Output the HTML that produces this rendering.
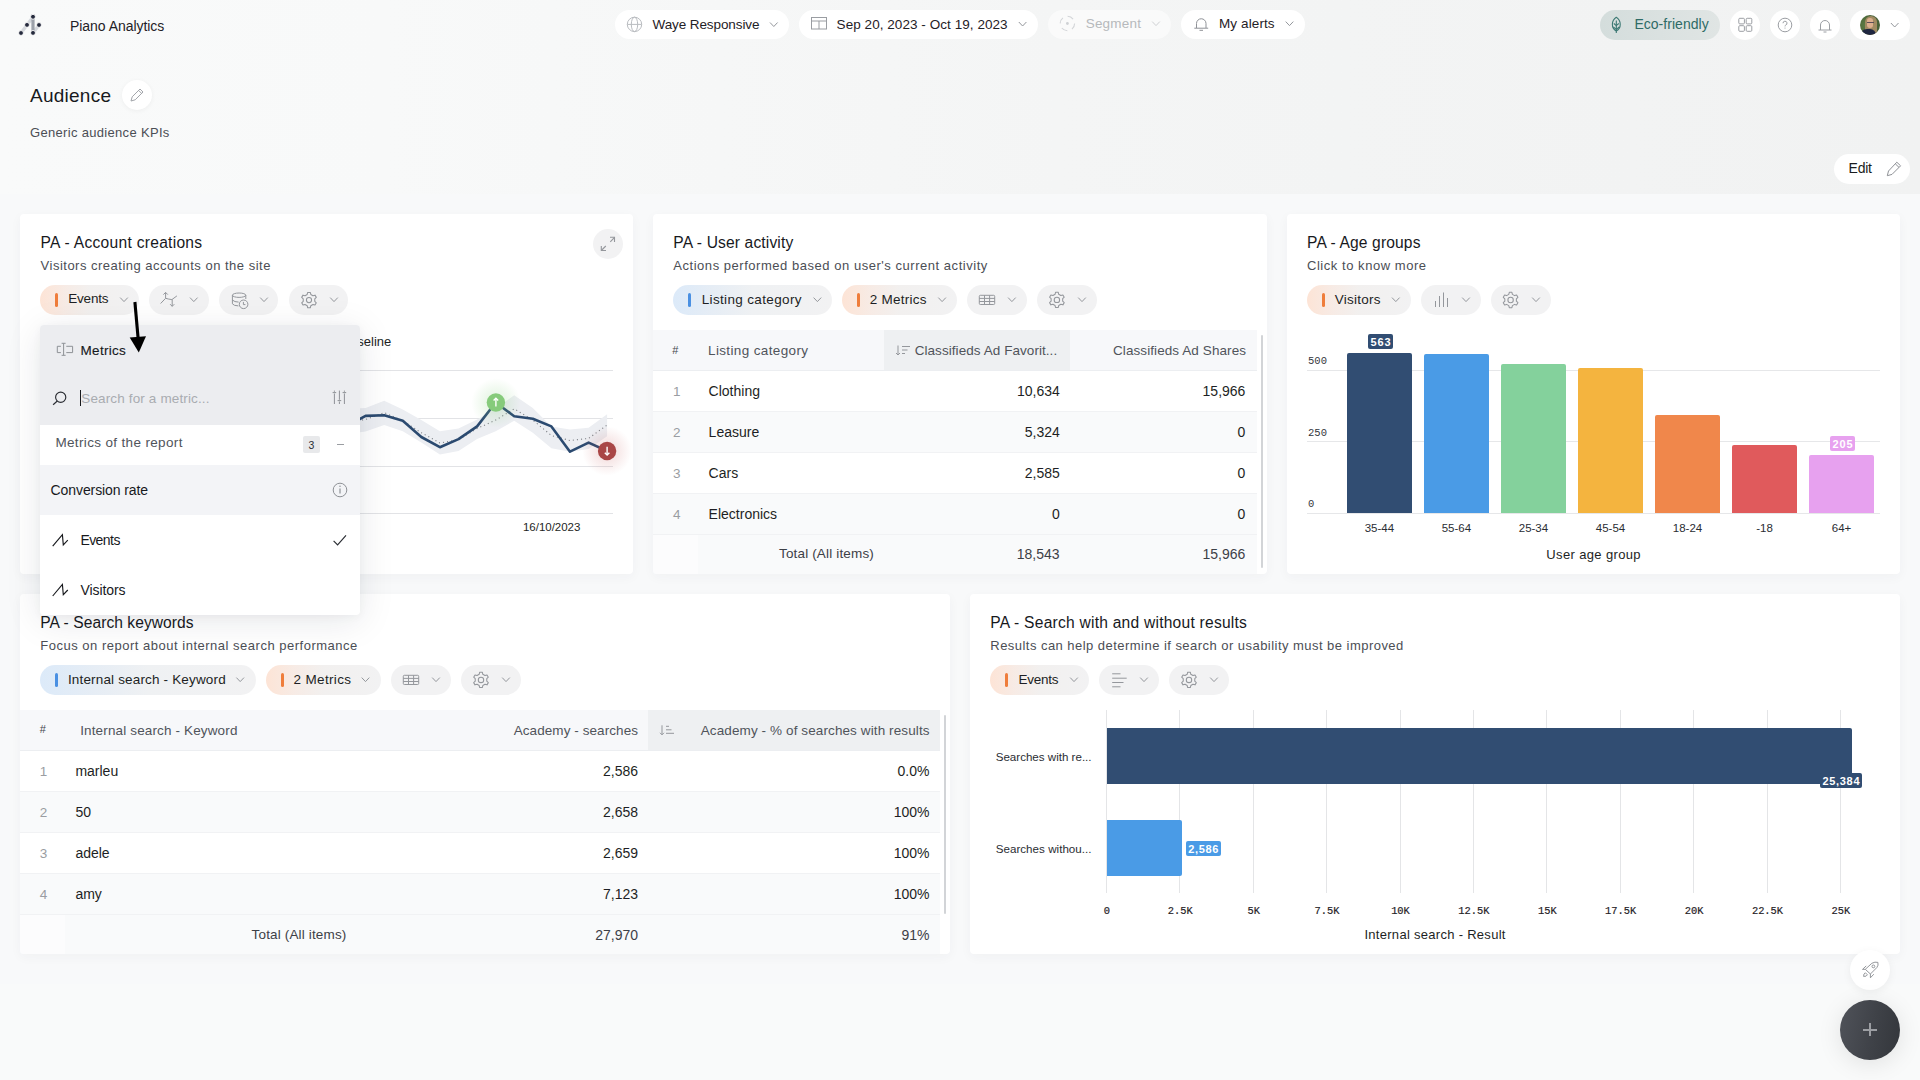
<!DOCTYPE html>
<html><head><meta charset="utf-8"><style>*{box-sizing:border-box;margin:0;padding:0}
html,body{width:1920px;height:1080px;overflow:hidden}
body{font-family:"Liberation Sans",sans-serif;color:#1d1f24;background:#f9fafa;position:relative}
.a{position:absolute}
.pill{position:absolute;height:30px;border-radius:15px;background:#fff}
.gp{position:absolute;height:30px;border-radius:15px;background:#f2f2f3}
.t{position:absolute;white-space:nowrap;line-height:1}
.card{position:absolute;background:#fff;border-radius:4px}
svg{position:absolute;overflow:visible}
</style></head><body>
<div class="a" style="left:0;top:0;width:1920px;height:194px;background:linear-gradient(90deg,#f9fafa 0%,#f8f9f9 20%,#f4f5f5 55%,#f1f2f2 100%)"></div>
<div class="a" style="left:0;top:194px;width:1920px;height:790px;background:#f8f9fa"></div>
<svg style="left:0;top:0" width="1" height="1"><line x1="21" y1="33" x2="33" y2="17" stroke="#d5d8dd" stroke-width="3.2" stroke-linecap="round"/>
 <line x1="33" y1="33" x2="39" y2="25" stroke="#d5d8dd" stroke-width="3.2"/>
 <line x1="33" y1="17" x2="33" y2="33" stroke="#9ca1aa" stroke-width="3.2"/>
 <circle cx="21" cy="33" r="2.45" fill="#252a3d" stroke="#fbfbfb" stroke-width="0.9"/><circle cx="27" cy="24.9" r="2.45" fill="#252a3d" stroke="#fbfbfb" stroke-width="0.9"/>
 <circle cx="33" cy="16.8" r="2.45" fill="#252a3d" stroke="#fbfbfb" stroke-width="0.9"/><circle cx="39" cy="25" r="2.45" fill="#252a3d" stroke="#fbfbfb" stroke-width="0.9"/>
 <circle cx="33" cy="32.9" r="2.45" fill="#252a3d" stroke="#fbfbfb" stroke-width="0.9"/></svg>
<div class="t" style="left:70.00px;top:18.65px;font-size:14px;color:#1f2126;letter-spacing:-0.046px;font-family:'Liberation Sans',sans-serif;">Piano Analytics</div>
<div class="pill" style="left:615px;top:10px;width:174px;height:29px"></div>
<svg style="left:0;top:0" width="1" height="1"><g fill="none" stroke="#b9bcc0" stroke-width="1"><circle cx="634.5" cy="24.4" r="7.2"/><ellipse cx="634.5" cy="24.4" rx="3.2" ry="7.2"/><line x1="627.3" y1="24.4" x2="641.7" y2="24.4"/></g></svg>
<div class="t" style="left:652.50px;top:17.87px;font-size:13.5px;color:#1f2126;letter-spacing:-0.093px;font-family:'Liberation Sans',sans-serif;">Waye Responsive</div>
<svg style="left:0;top:0" width="1" height="1"><polyline points="770.00,22.50 773.80,26.50 777.60,22.50" fill="none" stroke="#94979c" stroke-width="1.0"/></svg>
<div class="pill" style="left:799px;top:10px;width:239px;height:29px"></div>
<svg style="left:0;top:0" width="1" height="1"><g fill="none" stroke="#9a9da2" stroke-width="1"><rect x="811.5" y="17.5" width="15" height="11.5"/><line x1="811.5" y1="21" x2="826.5" y2="21"/><line x1="819" y1="21" x2="819" y2="29"/></g></svg>
<div class="t" style="left:836.60px;top:17.57px;font-size:13.5px;color:#1f2126;letter-spacing:0.053px;font-family:'Liberation Sans',sans-serif;">Sep 20, 2023 - Oct 19, 2023</div>
<svg style="left:0;top:0" width="1" height="1"><polyline points="1018.80,22.00 1022.60,26.00 1026.40,22.00" fill="none" stroke="#94979c" stroke-width="1.0"/></svg>
<div class="pill" style="left:1048px;top:10px;width:123px;height:29px;background:rgba(255,255,255,0.5)"></div>
<svg style="left:0;top:0" width="1" height="1"><circle cx="1067.4" cy="23.5" r="7.2" fill="none" stroke="#d3d5d8" stroke-width="1.1" stroke-dasharray="6.3 5"/><circle cx="1067.4" cy="23.5" r="1.4" fill="#cfd1d4"/></svg>
<div class="t" style="left:1085.70px;top:16.97px;font-size:13.5px;color:#b6b9bc;letter-spacing:0.211px;font-family:'Liberation Sans',sans-serif;">Segment</div>
<svg style="left:0;top:0" width="1" height="1"><polyline points="1152.20,21.60 1156.00,25.60 1159.80,21.60" fill="none" stroke="#cfd1d4" stroke-width="1.0"/></svg>
<div class="pill" style="left:1181px;top:10px;width:124px;height:29px"></div>
<svg style="left:0;top:0" width="1" height="1"><g fill="none" stroke="#8f9297" stroke-width="1"><path d="M1196.5 28 V23.5 a4.75 4.75 0 0 1 9.5 0 V28"/><line x1="1194.3" y1="28.2" x2="1208.2" y2="28.2"/><line x1="1199.5" y1="30.3" x2="1203" y2="30.3"/></g></svg>
<div class="t" style="left:1219.00px;top:16.97px;font-size:13.5px;color:#1f2126;letter-spacing:0.105px;font-family:'Liberation Sans',sans-serif;">My alerts</div>
<svg style="left:0;top:0" width="1" height="1"><polyline points="1285.70,21.60 1289.50,25.60 1293.30,21.60" fill="none" stroke="#94979c" stroke-width="1.0"/></svg>
<div class="pill" style="left:1600px;top:10px;width:120px;height:30px;background:linear-gradient(90deg,#d4dddc,#e0e5e4)"></div>
<svg style="left:0;top:0" width="1" height="1"><g fill="none" stroke="#3b7873" stroke-width="1.1"><path d="M1616.3 17.3 C1611.3 20.5 1610.8 28.3 1616.3 31 C1621.8 28.3 1621.3 20.5 1616.3 17.3 Z"/><line x1="1616.3" y1="20.5" x2="1616.3" y2="33"/>
 <polyline points="1613.8,23.5 1616.3,25.6 1618.8,23.5"/><polyline points="1613.3,27 1616.3,29.4 1619.3,27"/></g></svg>
<div class="t" style="left:1634.40px;top:16.85px;font-size:14px;color:#2e6b66;letter-spacing:0.035px;font-family:'Liberation Sans',sans-serif;">Eco-friendly</div>
<div class="pill" style="left:1730px;top:10px;width:30px;height:30px"></div>
<div class="pill" style="left:1770px;top:10px;width:30px;height:30px"></div>
<div class="pill" style="left:1810px;top:10px;width:30px;height:30px"></div>
<svg style="left:0;top:0" width="1" height="1"><g fill="none" stroke="#9b9ea3" stroke-width="1"><rect x="1738.8" y="18.3" width="5.6" height="5.6" rx="1"/><rect x="1746.2" y="18.3" width="5.6" height="5.6" rx="1"/><rect x="1738.8" y="25.7" width="5.6" height="5.6" rx="1"/><rect x="1746.2" y="25.7" width="5.6" height="5.6" rx="1"/></g></svg>
<svg style="left:0;top:0" width="1" height="1"><circle cx="1785" cy="25" r="6.8" fill="none" stroke="#9b9ea3" stroke-width="1"/><path d="M1783 23.2 a2 2 0 1 1 2.7 1.9 q-0.7 0.3 -0.7 1.3" fill="none" stroke="#9b9ea3" stroke-width="1"/><circle cx="1785" cy="28" r="0.6" fill="#9b9ea3"/></svg>
<svg style="left:0;top:0" width="1" height="1"><g fill="none" stroke="#9b9ea3" stroke-width="1"><path d="M1820.5 30 V25 a4.5 4.5 0 0 1 9 0 V30"/><line x1="1818.5" y1="30" x2="1831.5" y2="30"/><line x1="1823.5" y1="32" x2="1826.5" y2="32"/></g></svg>
<div class="pill" style="left:1850px;top:10px;width:60px;height:30px"></div>
<div class="a" style="left:1860px;top:15px;width:20px;height:20px;border-radius:10px;overflow:hidden;background:radial-gradient(circle at 30% 50%,#5d7d45,#3f5532)"><div class="a" style="left:4.5px;top:0.5px;width:12.5px;height:19px;border-radius:6px 6px 4px 4px;background:#a08a62"></div><div class="a" style="left:6.8px;top:2.5px;width:6.6px;height:10px;border-radius:3.3px 3.3px 3.5px 3.5px;background:#dcae8e"></div><div class="a" style="left:6.5px;top:6.5px;width:7px;height:1.4px;background:#5b4d57"></div><div class="a" style="left:0px;top:13.5px;width:16px;height:9px;border-radius:7px 6px 0 0;background:#1f2640"></div></div>
<svg style="left:0;top:0" width="1" height="1"><polyline points="1890.90,23.00 1894.70,27.00 1898.50,23.00" fill="none" stroke="#94979c" stroke-width="1.0"/></svg>
<div class="t" style="left:30.00px;top:85.92px;font-size:19px;color:#17191d;letter-spacing:0.253px;font-family:'Liberation Sans',sans-serif;">Audience</div>
<div class="pill" style="left:122px;top:80px;width:30px;height:30px;box-shadow:0 1px 5px rgba(0,0,0,0.05)"></div>
<svg style="left:0;top:0" width="1" height="1"><g fill="none" stroke="#a2a5aa" stroke-width="1" stroke-linejoin="round"><path d="M131 101 L132.2 96.8 L140 89 L143 92 L135.2 99.8 Z"/><line x1="138.6" y1="90.4" x2="141.6" y2="93.4"/></g></svg>
<div class="t" style="left:30.00px;top:126.00px;font-size:13px;color:#4b4e55;letter-spacing:0.317px;font-family:'Liberation Sans',sans-serif;">Generic audience KPIs</div>
<div class="pill" style="left:1834px;top:154px;width:76px;height:30px"></div>
<div class="t" style="left:1848.60px;top:161.35px;font-size:14px;color:#1a1c20;letter-spacing:-0.275px;font-family:'Liberation Sans',sans-serif;">Edit</div>
<svg style="left:0;top:0" width="1" height="1"><g fill="none" stroke="#8e9196" stroke-width="1" stroke-linejoin="round"><path d="M1887.3 175.7 L1888.5 171 L1896.8 162.2 L1900.6 165.8 L1892 174.4 Z"/><line x1="1895.3" y1="163.8" x2="1899" y2="167.4"/></g></svg>
<div class="card" style="left:20px;top:214px;width:613px;height:360px;box-shadow:0 3px 12px rgba(40,50,70,0.04)"></div>
<div class="card" style="left:653px;top:214px;width:614px;height:360px;box-shadow:0 3px 12px rgba(40,50,70,0.04)"></div>
<div class="card" style="left:1287px;top:214px;width:613px;height:360px;box-shadow:0 3px 12px rgba(40,50,70,0.04)"></div>
<div class="card" style="left:20px;top:594px;width:930px;height:360px;box-shadow:0 3px 12px rgba(40,50,70,0.04)"></div>
<div class="card" style="left:970px;top:594px;width:930px;height:360px;box-shadow:0 3px 12px rgba(40,50,70,0.04)"></div>
<div class="t" style="left:40.60px;top:234.79px;font-size:15.6px;color:#17191d;letter-spacing:0.276px;font-family:'Liberation Sans',sans-serif;">PA - Account creations</div>
<div class="t" style="left:40.60px;top:258.70px;font-size:13px;color:#4b4e55;letter-spacing:0.495px;font-family:'Liberation Sans',sans-serif;">Visitors creating accounts on the site</div>
<div class="a" style="left:593px;top:229px;width:30px;height:30px;border-radius:15px;background:#f2f2f3"></div>
<svg style="left:0;top:0" width="1" height="1"><g fill="none" stroke="#94979c" stroke-width="1.1"><polyline points="610,237.3 614.5,237.3 614.5,242"/><line x1="610.3" y1="241.8" x2="614.5" y2="237.3"/><polyline points="601.3,246 601.3,250.5 606,250.5"/><line x1="601.3" y1="250.5" x2="605.8" y2="246"/></g></svg>
<div class="a" style="left:40.0px;top:285.0px;width:98.6px;height:30.0px;border-radius:15px;background:linear-gradient(90deg,#fde4d6 0%,#f7ebe5 25%,#f2f0ef 50%,#f2f2f3 100%)"></div>
<div class="a" style="left:55.0px;top:293.0px;width:3px;height:14px;border-radius:1.5px;background:#ef7d3b"></div>
<div class="t" style="left:68.30px;top:292.47px;font-size:13.5px;color:#1d1f24;letter-spacing:-0.214px;font-family:'Liberation Sans',sans-serif;">Events</div>
<svg style="left:0;top:0" width="1" height="1"><polyline points="120.20,297.60 124.00,301.60 127.80,297.60" fill="none" stroke="#94979c" stroke-width="1.0"/></svg>
<div class="a" style="left:149.3px;top:285.0px;width:59.3px;height:30.0px;border-radius:15px;background:#f2f2f3"></div>
<svg style="left:0;top:0" width="1" height="1"><g fill="none" stroke="#94979c" stroke-width="1"><polyline points="160.6,303.5 165.6,298.3 168.8,299.1 171.9,299.6 176.9,295.9"/><line x1="165.6" y1="298.3" x2="165.6" y2="292.5"/><polyline points="163.4,294.6 165.6,292.4 167.8,294.6"/><line x1="172.2" y1="299.6" x2="172.2" y2="306.3"/><polyline points="170.1,304.2 172.2,306.3 174.3,304.2"/></g></svg>
<svg style="left:0;top:0" width="1" height="1"><polyline points="190.00,297.60 193.80,301.60 197.60,297.60" fill="none" stroke="#94979c" stroke-width="1.0"/></svg>
<div class="a" style="left:219.2px;top:285.0px;width:59.3px;height:30.0px;border-radius:15px;background:#f2f2f3"></div>
<svg style="left:0;top:0" width="1" height="1"><g fill="none" stroke="#94979c" stroke-width="1"><ellipse cx="239.1" cy="295.2" rx="6.7" ry="2.2"/><path d="M232.4 295.2 V303.8 q1.2 2 6 2.1"/><path d="M232.4 300 q2 2.1 6.2 2.1"/><path d="M245.8 295.2 V299"/></g><circle cx="243.6" cy="304.3" r="4.3" fill="#f2f2f3" stroke="#94979c" stroke-width="1"/><polyline points="243.4,301.9 243.4,304.6 245.4,304.6" fill="none" stroke="#94979c" stroke-width="1"/></svg>
<svg style="left:0;top:0" width="1" height="1"><polyline points="260.20,297.60 264.00,301.60 267.80,297.60" fill="none" stroke="#94979c" stroke-width="1.0"/></svg>
<div class="a" style="left:289.2px;top:285.0px;width:59.3px;height:30.0px;border-radius:15px;background:#f2f2f3"></div>
<svg style="left:0;top:0" width="1" height="1"><path d="M307.18 294.49 L307.70 292.41 L310.30 292.41 L310.82 294.49 L312.95 295.72 L315.01 295.13 L316.31 297.38 L314.77 298.87 L314.77 301.33 L316.31 302.82 L315.01 305.07 L312.95 304.48 L310.82 305.71 L310.30 307.79 L307.70 307.79 L307.18 305.71 L305.05 304.48 L302.99 305.07 L301.69 302.82 L303.23 301.33 L303.23 298.87 L301.69 297.38 L302.99 295.13 L305.05 295.72 Z" fill="none" stroke="#94979c" stroke-width="1.05" stroke-linejoin="round"/><circle cx="309" cy="300.1" r="2.6" fill="none" stroke="#94979c" stroke-width="1.05"/></svg>
<svg style="left:0;top:0" width="1" height="1"><polyline points="330.20,297.60 334.00,301.60 337.80,297.60" fill="none" stroke="#94979c" stroke-width="1.0"/></svg>
<div class="a" style="left:60px;top:369.8px;width:553px;height:1px;background:#e2e3e6"></div>
<div class="a" style="left:60px;top:417.7px;width:553px;height:1px;background:#e2e3e6"></div>
<div class="a" style="left:60px;top:465.7px;width:553px;height:1px;background:#e2e3e6"></div>
<div class="a" style="left:60px;top:512.6px;width:553px;height:1px;background:#e2e3e6"></div>
<div class="t" style="left:341.43px;top:335.00px;font-size:13px;color:#1d1f24;font-family:'Liberation Sans',sans-serif;">Baseline</div>
<div class="t" style="left:523.00px;top:522.17px;font-size:11.5px;color:#1d1f24;letter-spacing:-0.029px;font-family:'Liberation Sans',sans-serif;">16/10/2023</div>
<svg style="left:0;top:0" width="1" height="1"><polygon points="309.9,414 328.4,410 347.0,409 365.6,408 384.2,400.8 402.8,409.5 421.3,420.1 439.9,431.3 458.5,428.5 477.1,419.4 495.7,408.8 514.2,395.2 532.8,408.1 551.4,426.4 570.0,429.5 588.6,427.8 607.1,414.2 607.1,436.3 588.6,448.9 570.0,451.7 551.4,448.2 532.8,432.7 514.2,420.8 495.7,431.3 477.1,439.1 458.5,451 439.9,454.5 421.3,442.6 402.8,431.3 384.2,425 365.6,431.5 347.0,434 328.4,440 309.9,448" fill="#eceef2"/><polyline points="309.9,431 328.4,426 347.0,422 365.6,419.5 384.2,412.6 402.8,420.8 421.3,432.7 439.9,443 458.5,439.8 477.1,428.5 495.7,420.1 514.2,408.8 532.8,420.1 551.4,435.5 570.0,440.5 588.6,438.4 607.1,425" fill="none" stroke="#7d8086" stroke-width="1.1" stroke-dasharray="1.1 3"/><polyline points="309.9,440 328.4,432 347.0,426 365.6,415.9 384.2,415.2 402.8,420.8 421.3,437 439.9,447.2 458.5,439.1 477.1,426.4 495.7,402.5 514.2,416.3 532.8,418.7 551.4,426.4 570.0,451.7 588.6,442.6 607.1,451" fill="none" stroke="#2b4a70" stroke-width="2.6" stroke-linejoin="round"/></svg>
<div class="a" style="left:471px;top:378px;width:50px;height:50px;border-radius:25px;background:radial-gradient(circle,rgba(134,207,126,0.28) 0%,rgba(134,207,126,0.10) 45%,rgba(134,207,126,0) 70%)"></div>
<div class="a" style="left:582px;top:426px;width:50px;height:50px;border-radius:25px;background:radial-gradient(circle,rgba(190,70,70,0.22) 0%,rgba(190,70,70,0.08) 45%,rgba(190,70,70,0) 70%)"></div>
<svg style="left:0;top:0" width="1" height="1"><circle cx="495.9" cy="402.5" r="9.2" fill="#86cb7b"/><g stroke="#fff" stroke-width="1.4" fill="none"><line x1="495.9" y1="398.3" x2="495.9" y2="406.5"/><polyline points="493.6,400.6 495.9,398.3 498.2,400.6"/></g><circle cx="607.1" cy="451" r="9.2" fill="#a94646"/><g stroke="#fff" stroke-width="1.4" fill="none"><line x1="607.1" y1="446.8" x2="607.1" y2="455"/><polyline points="604.8,452.7 607.1,455 609.4,452.7"/></g></svg>
<div class="t" style="left:673.30px;top:234.79px;font-size:15.6px;color:#17191d;letter-spacing:0.141px;font-family:'Liberation Sans',sans-serif;">PA - User activity</div>
<div class="t" style="left:673.30px;top:258.70px;font-size:13px;color:#4b4e55;letter-spacing:0.533px;font-family:'Liberation Sans',sans-serif;">Actions performed based on user's current activity</div>
<div class="a" style="left:673.0px;top:285.0px;width:158.8px;height:30.0px;border-radius:15px;background:linear-gradient(90deg,#dceaf9 0%,#e6edf5 25%,#eff1f3 50%,#f2f2f3 100%)"></div>
<div class="a" style="left:688.0px;top:293.0px;width:3px;height:14px;border-radius:1.5px;background:#4a90e2"></div>
<div class="t" style="left:701.70px;top:292.67px;font-size:13.5px;color:#1d1f24;letter-spacing:0.350px;font-family:'Liberation Sans',sans-serif;">Listing category</div>
<svg style="left:0;top:0" width="1" height="1"><polyline points="813.60,297.60 817.40,301.60 821.20,297.60" fill="none" stroke="#94979c" stroke-width="1.0"/></svg>
<div class="a" style="left:842.3px;top:285.0px;width:114.4px;height:30.0px;border-radius:15px;background:linear-gradient(90deg,#fde4d6 0%,#f7ebe5 25%,#f2f0ef 50%,#f2f2f3 100%)"></div>
<div class="a" style="left:857.0px;top:293.0px;width:3px;height:14px;border-radius:1.5px;background:#ef7d3b"></div>
<div class="t" style="left:869.70px;top:292.67px;font-size:13.5px;color:#1d1f24;letter-spacing:0.255px;font-family:'Liberation Sans',sans-serif;">2 Metrics</div>
<svg style="left:0;top:0" width="1" height="1"><polyline points="938.30,297.60 942.10,301.60 945.90,297.60" fill="none" stroke="#94979c" stroke-width="1.0"/></svg>
<div class="a" style="left:967.0px;top:285.0px;width:59.8px;height:30.0px;border-radius:15px;background:#f2f2f3"></div>
<svg style="left:0;top:0" width="1" height="1"><g fill="none" stroke="#94979c" stroke-width="1"><rect x="979.3" y="295.3" width="15.400000000000091" height="9.199999999999989" rx="1"/><line x1="979.3" y1="298.40000000000003" x2="994.7" y2="298.40000000000003"/><line x1="979.3" y1="301.5" x2="994.7" y2="301.5"/><line x1="984.5" y1="295.3" x2="984.5" y2="304.5"/><line x1="989.5999999999999" y1="295.3" x2="989.5999999999999" y2="304.5"/></g></svg>
<svg style="left:0;top:0" width="1" height="1"><polyline points="1008.10,297.60 1011.90,301.60 1015.70,297.60" fill="none" stroke="#94979c" stroke-width="1.0"/></svg>
<div class="a" style="left:1036.8px;top:285.0px;width:60.2px;height:30.0px;border-radius:15px;background:#f2f2f3"></div>
<svg style="left:0;top:0" width="1" height="1"><path d="M1055.08 294.29 L1055.60 292.21 L1058.20 292.21 L1058.72 294.29 L1060.85 295.52 L1062.91 294.93 L1064.21 297.18 L1062.67 298.67 L1062.67 301.13 L1064.21 302.62 L1062.91 304.87 L1060.85 304.28 L1058.72 305.51 L1058.20 307.59 L1055.60 307.59 L1055.08 305.51 L1052.95 304.28 L1050.89 304.87 L1049.59 302.62 L1051.13 301.13 L1051.13 298.67 L1049.59 297.18 L1050.89 294.93 L1052.95 295.52 Z" fill="none" stroke="#94979c" stroke-width="1.05" stroke-linejoin="round"/><circle cx="1056.9" cy="299.9" r="2.7" fill="none" stroke="#94979c" stroke-width="1.05"/></svg>
<svg style="left:0;top:0" width="1" height="1"><polyline points="1078.20,297.60 1082.00,301.60 1085.80,297.60" fill="none" stroke="#94979c" stroke-width="1.0"/></svg>
<div class="a" style="left:653px;top:330px;width:604px;height:40px;background:#f7f8fa"></div>
<div class="a" style="left:884px;top:330px;width:186px;height:40px;background:#eef0f2"></div>
<div class="a" style="left:653px;top:370px;width:604px;height:1px;background:#eceef1"></div>
<div class="t" style="left:672.20px;top:345.19px;font-size:11px;color:#44474d;font-family:'Liberation Sans',sans-serif;">#</div>
<div class="t" style="left:708.00px;top:344.27px;font-size:13.5px;color:#50545b;letter-spacing:0.370px;font-family:'Liberation Sans',sans-serif;">Listing category</div>
<svg style="left:0;top:0" width="1" height="1"><g fill="none" stroke="#94979c" stroke-width="1"><line x1="898" y1="345.5" x2="898" y2="355.0"/><polyline points="896,353.0 898,355.0 900,353.0"/><line x1="902" y1="346.5" x2="910" y2="346.5"/><line x1="902" y1="350.0" x2="907.5" y2="350.0"/><line x1="902" y1="353.5" x2="905" y2="353.5"/></g></svg>
<div class="t" style="left:914.70px;top:344.27px;font-size:13.5px;color:#50545b;letter-spacing:0.060px;font-family:'Liberation Sans',sans-serif;">Classifieds Ad Favorit...</div>
<div class="t" style="left:1113.00px;top:344.27px;font-size:13.5px;color:#50545b;letter-spacing:0.084px;font-family:'Liberation Sans',sans-serif;">Classifieds Ad Shares</div>
<div class="a" style="left:653px;top:411px;width:604px;height:1px;background:#f1f2f4"></div>
<div class="t" style="left:672.90px;top:384.87px;font-size:13.5px;color:#9a9da2;font-family:'Liberation Sans',sans-serif;">1</div>
<div class="t" style="left:708.60px;top:384.45px;font-size:14px;color:#1d1f24;font-family:'Liberation Sans',sans-serif;">Clothing</div>
<div class="t" style="left:1016.98px;top:384.45px;font-size:14px;color:#1d1f24;font-family:'Liberation Sans',sans-serif;">10,634</div>
<div class="t" style="left:1202.58px;top:384.45px;font-size:14px;color:#1d1f24;font-family:'Liberation Sans',sans-serif;">15,966</div>
<div class="a" style="left:653px;top:412px;width:604px;height:41px;background:#f9fafb"></div>
<div class="a" style="left:653px;top:452px;width:604px;height:1px;background:#f1f2f4"></div>
<div class="t" style="left:672.90px;top:425.87px;font-size:13.5px;color:#9a9da2;font-family:'Liberation Sans',sans-serif;">2</div>
<div class="t" style="left:708.60px;top:425.45px;font-size:14px;color:#1d1f24;font-family:'Liberation Sans',sans-serif;">Leasure</div>
<div class="t" style="left:1024.76px;top:425.45px;font-size:14px;color:#1d1f24;font-family:'Liberation Sans',sans-serif;">5,324</div>
<div class="t" style="left:1237.61px;top:425.45px;font-size:14px;color:#1d1f24;font-family:'Liberation Sans',sans-serif;">0</div>
<div class="a" style="left:653px;top:493px;width:604px;height:1px;background:#f1f2f4"></div>
<div class="t" style="left:672.90px;top:466.87px;font-size:13.5px;color:#9a9da2;font-family:'Liberation Sans',sans-serif;">3</div>
<div class="t" style="left:708.60px;top:466.45px;font-size:14px;color:#1d1f24;font-family:'Liberation Sans',sans-serif;">Cars</div>
<div class="t" style="left:1024.76px;top:466.45px;font-size:14px;color:#1d1f24;font-family:'Liberation Sans',sans-serif;">2,585</div>
<div class="t" style="left:1237.61px;top:466.45px;font-size:14px;color:#1d1f24;font-family:'Liberation Sans',sans-serif;">0</div>
<div class="a" style="left:653px;top:494px;width:604px;height:41px;background:#f9fafb"></div>
<div class="a" style="left:653px;top:534px;width:604px;height:1px;background:#f1f2f4"></div>
<div class="t" style="left:672.90px;top:507.87px;font-size:13.5px;color:#9a9da2;font-family:'Liberation Sans',sans-serif;">4</div>
<div class="t" style="left:708.60px;top:507.45px;font-size:14px;color:#1d1f24;font-family:'Liberation Sans',sans-serif;">Electronics</div>
<div class="t" style="left:1052.01px;top:507.45px;font-size:14px;color:#1d1f24;font-family:'Liberation Sans',sans-serif;">0</div>
<div class="t" style="left:1237.61px;top:507.45px;font-size:14px;color:#1d1f24;font-family:'Liberation Sans',sans-serif;">0</div>
<div class="a" style="left:653px;top:535px;width:604px;height:39px;background:#f9fafb;border-radius:0 0 0 4px"></div>
<div class="a" style="left:653px;top:535px;width:45px;height:39px;background:#fcfcfd;border-radius:0 0 0 4px"></div>
<div class="t" style="left:779.00px;top:547.47px;font-size:13.5px;color:#3d4047;letter-spacing:0.158px;font-family:'Liberation Sans',sans-serif;">Total (All items)</div>
<div class="t" style="left:1016.68px;top:547.05px;font-size:14px;color:#3d4047;font-family:'Liberation Sans',sans-serif;">18,543</div>
<div class="t" style="left:1202.48px;top:547.05px;font-size:14px;color:#3d4047;font-family:'Liberation Sans',sans-serif;">15,966</div>
<div class="a" style="left:1260.5px;top:335px;width:2px;height:233px;background:#d2d4d7;border-radius:1px"></div>
<div class="t" style="left:1307.00px;top:234.79px;font-size:15.6px;color:#17191d;letter-spacing:0.137px;font-family:'Liberation Sans',sans-serif;">PA - Age groups</div>
<div class="t" style="left:1307.00px;top:258.70px;font-size:13px;color:#4b4e55;letter-spacing:0.541px;font-family:'Liberation Sans',sans-serif;">Click to know more</div>
<div class="a" style="left:1307.0px;top:285.0px;width:104.0px;height:30.0px;border-radius:15px;background:linear-gradient(90deg,#fde4d6 0%,#f7ebe5 25%,#f2f0ef 50%,#f2f2f3 100%)"></div>
<div class="a" style="left:1322.0px;top:293.0px;width:3px;height:14px;border-radius:1.5px;background:#ef7d3b"></div>
<div class="t" style="left:1334.80px;top:292.67px;font-size:13.5px;color:#1d1f24;letter-spacing:0.226px;font-family:'Liberation Sans',sans-serif;">Visitors</div>
<svg style="left:0;top:0" width="1" height="1"><polyline points="1392.00,297.60 1395.80,301.60 1399.60,297.60" fill="none" stroke="#94979c" stroke-width="1.0"/></svg>
<div class="a" style="left:1421.1px;top:285.0px;width:59.6px;height:30.0px;border-radius:15px;background:#f2f2f3"></div>
<svg style="left:0;top:0" width="1" height="1"><g stroke="#94979c" stroke-width="1"><line x1="1435.5" y1="301" x2="1435.5" y2="307"/><line x1="1439.5" y1="296" x2="1439.5" y2="307"/><line x1="1443.5" y1="292.5" x2="1443.5" y2="307"/><line x1="1447.5" y1="298" x2="1447.5" y2="307"/></g></svg>
<svg style="left:0;top:0" width="1" height="1"><polyline points="1462.20,297.60 1466.00,301.60 1469.80,297.60" fill="none" stroke="#94979c" stroke-width="1.0"/></svg>
<div class="a" style="left:1491.4px;top:285.0px;width:59.2px;height:30.0px;border-radius:15px;background:#f2f2f3"></div>
<svg style="left:0;top:0" width="1" height="1"><path d="M1508.78 294.39 L1509.30 292.31 L1511.90 292.31 L1512.42 294.39 L1514.55 295.62 L1516.61 295.03 L1517.91 297.28 L1516.37 298.77 L1516.37 301.23 L1517.91 302.72 L1516.61 304.97 L1514.55 304.38 L1512.42 305.61 L1511.90 307.69 L1509.30 307.69 L1508.78 305.61 L1506.65 304.38 L1504.59 304.97 L1503.29 302.72 L1504.83 301.23 L1504.83 298.77 L1503.29 297.28 L1504.59 295.03 L1506.65 295.62 Z" fill="none" stroke="#94979c" stroke-width="1.05" stroke-linejoin="round"/><circle cx="1510.6" cy="300" r="2.7" fill="none" stroke="#94979c" stroke-width="1.05"/></svg>
<svg style="left:0;top:0" width="1" height="1"><polyline points="1532.20,297.60 1536.00,301.60 1539.80,297.60" fill="none" stroke="#94979c" stroke-width="1.0"/></svg>
<div class="a" style="left:1307px;top:369.9px;width:573px;height:1px;background:#e6e7e9"></div>
<div class="t" style="left:1308.00px;top:356.35px;font-size:10.5px;color:#33363c;letter-spacing:0.049px;font-family:'Liberation Mono',monospace;">500</div>
<div class="a" style="left:1307px;top:440.8px;width:573px;height:1px;background:#e6e7e9"></div>
<div class="t" style="left:1308.00px;top:427.55px;font-size:10.5px;color:#33363c;letter-spacing:0.049px;font-family:'Liberation Mono',monospace;">250</div>
<div class="a" style="left:1307px;top:512.8px;width:573px;height:1px;background:#e6e7e9"></div>
<div class="t" style="left:1308.00px;top:499.25px;font-size:10.5px;color:#33363c;font-family:'Liberation Mono',monospace;">0</div>
<div class="a" style="left:1347.00px;top:353.1px;width:64.8px;height:159.9px;background:#314d72;border-radius:2px 2px 0 0"></div>
<div class="t" style="left:1364.69px;top:523.27px;font-size:11.5px;color:#2a2d33;font-family:'Liberation Sans',sans-serif;">35-44</div>
<div class="a" style="left:1424.03px;top:354.0px;width:64.8px;height:159.0px;background:#4a9be6;border-radius:2px 2px 0 0"></div>
<div class="t" style="left:1441.72px;top:523.27px;font-size:11.5px;color:#2a2d33;font-family:'Liberation Sans',sans-serif;">55-64</div>
<div class="a" style="left:1501.06px;top:364.2px;width:64.8px;height:148.8px;background:#84d19c;border-radius:2px 2px 0 0"></div>
<div class="t" style="left:1518.75px;top:523.27px;font-size:11.5px;color:#2a2d33;font-family:'Liberation Sans',sans-serif;">25-34</div>
<div class="a" style="left:1578.09px;top:367.9px;width:64.8px;height:145.1px;background:#f4b43f;border-radius:2px 2px 0 0"></div>
<div class="t" style="left:1595.78px;top:523.27px;font-size:11.5px;color:#2a2d33;font-family:'Liberation Sans',sans-serif;">45-54</div>
<div class="a" style="left:1655.12px;top:414.9px;width:64.8px;height:98.1px;background:#f0874b;border-radius:2px 2px 0 0"></div>
<div class="t" style="left:1672.81px;top:523.27px;font-size:11.5px;color:#2a2d33;font-family:'Liberation Sans',sans-serif;">18-24</div>
<div class="a" style="left:1732.15px;top:445.0px;width:64.8px;height:68.0px;background:#e05a5c;border-radius:2px 2px 0 0"></div>
<div class="t" style="left:1756.24px;top:523.27px;font-size:11.5px;color:#2a2d33;font-family:'Liberation Sans',sans-serif;">-18</div>
<div class="a" style="left:1809.18px;top:455.0px;width:64.8px;height:58.0px;background:#e7a1ef;border-radius:2px 2px 0 0"></div>
<div class="t" style="left:1831.83px;top:523.27px;font-size:11.5px;color:#2a2d33;font-family:'Liberation Sans',sans-serif;">64+</div>
<div class="a" style="left:1368px;top:334px;width:25px;height:15px;background:#314d72;border-radius:2px"></div>
<div class="t" style="left:1370.50px;top:336.69px;font-size:11px;color:#ffffff;font-weight:700;letter-spacing:0.823px;font-family:'Liberation Sans',sans-serif;">563</div>
<div class="a" style="left:1830.2px;top:436.1px;width:24.6px;height:14.7px;background:#e7a1ef;border-radius:2px"></div>
<div class="t" style="left:1832.50px;top:438.59px;font-size:11px;color:#ffffff;font-weight:700;letter-spacing:0.823px;font-family:'Liberation Sans',sans-serif;">205</div>
<div class="t" style="left:1546.30px;top:548.00px;font-size:13px;color:#1d1f24;letter-spacing:0.361px;font-family:'Liberation Sans',sans-serif;">User age group</div>
<div class="t" style="left:40.30px;top:614.69px;font-size:15.6px;color:#17191d;letter-spacing:0.057px;font-family:'Liberation Sans',sans-serif;">PA - Search keywords</div>
<div class="t" style="left:40.30px;top:639.00px;font-size:13px;color:#4b4e55;letter-spacing:0.507px;font-family:'Liberation Sans',sans-serif;">Focus on report about internal search performance</div>
<div class="a" style="left:40.2px;top:665.0px;width:215.7px;height:30.0px;border-radius:15px;background:linear-gradient(90deg,#dceaf9 0%,#e6edf5 25%,#eff1f3 50%,#f2f2f3 100%)"></div>
<div class="a" style="left:55.0px;top:673.0px;width:3px;height:14px;border-radius:1.5px;background:#4a90e2"></div>
<div class="t" style="left:67.90px;top:672.57px;font-size:13.5px;color:#1d1f24;letter-spacing:0.166px;font-family:'Liberation Sans',sans-serif;">Internal search - Keyword</div>
<svg style="left:0;top:0" width="1" height="1"><polyline points="236.40,677.60 240.20,681.60 244.00,677.60" fill="none" stroke="#94979c" stroke-width="1.0"/></svg>
<div class="a" style="left:265.8px;top:665.0px;width:115.2px;height:30.0px;border-radius:15px;background:linear-gradient(90deg,#fde4d6 0%,#f7ebe5 25%,#f2f0ef 50%,#f2f2f3 100%)"></div>
<div class="a" style="left:281.0px;top:673.0px;width:3px;height:14px;border-radius:1.5px;background:#ef7d3b"></div>
<div class="t" style="left:293.50px;top:672.57px;font-size:13.5px;color:#1d1f24;letter-spacing:0.343px;font-family:'Liberation Sans',sans-serif;">2 Metrics</div>
<svg style="left:0;top:0" width="1" height="1"><polyline points="361.70,677.60 365.50,681.60 369.30,677.60" fill="none" stroke="#94979c" stroke-width="1.0"/></svg>
<div class="a" style="left:391.0px;top:665.0px;width:59.9px;height:30.0px;border-radius:15px;background:#f2f2f3"></div>
<svg style="left:0;top:0" width="1" height="1"><g fill="none" stroke="#94979c" stroke-width="1"><rect x="403.3" y="675.3" width="15.399999999999977" height="9.200000000000045" rx="1"/><line x1="403.3" y1="678.4" x2="418.7" y2="678.4"/><line x1="403.3" y1="681.5" x2="418.7" y2="681.5"/><line x1="408.5" y1="675.3" x2="408.5" y2="684.5"/><line x1="413.6" y1="675.3" x2="413.6" y2="684.5"/></g></svg>
<svg style="left:0;top:0" width="1" height="1"><polyline points="432.20,677.60 436.00,681.60 439.80,677.60" fill="none" stroke="#94979c" stroke-width="1.0"/></svg>
<div class="a" style="left:461.3px;top:665.0px;width:59.3px;height:30.0px;border-radius:15px;background:#f2f2f3"></div>
<svg style="left:0;top:0" width="1" height="1"><path d="M479.18 674.29 L479.70 672.21 L482.30 672.21 L482.82 674.29 L484.95 675.52 L487.01 674.93 L488.31 677.18 L486.77 678.67 L486.77 681.13 L488.31 682.62 L487.01 684.87 L484.95 684.28 L482.82 685.51 L482.30 687.59 L479.70 687.59 L479.18 685.51 L477.05 684.28 L474.99 684.87 L473.69 682.62 L475.23 681.13 L475.23 678.67 L473.69 677.18 L474.99 674.93 L477.05 675.52 Z" fill="none" stroke="#94979c" stroke-width="1.05" stroke-linejoin="round"/><circle cx="481" cy="679.9" r="2.7" fill="none" stroke="#94979c" stroke-width="1.05"/></svg>
<svg style="left:0;top:0" width="1" height="1"><polyline points="502.20,677.60 506.00,681.60 509.80,677.60" fill="none" stroke="#94979c" stroke-width="1.0"/></svg>
<div class="a" style="left:20px;top:710px;width:920px;height:40px;background:#f7f8fa"></div>
<div class="a" style="left:648px;top:710px;width:292px;height:40px;background:#eef0f2"></div>
<div class="a" style="left:20px;top:750px;width:920px;height:1px;background:#eceef1"></div>
<div class="t" style="left:39.70px;top:724.39px;font-size:11px;color:#44474d;font-family:'Liberation Sans',sans-serif;">#</div>
<div class="t" style="left:80.20px;top:723.57px;font-size:13.5px;color:#50545b;letter-spacing:0.141px;font-family:'Liberation Sans',sans-serif;">Internal search - Keyword</div>
<div class="t" style="left:513.70px;top:723.57px;font-size:13.5px;color:#50545b;letter-spacing:0.073px;font-family:'Liberation Sans',sans-serif;">Academy - searches</div>
<svg style="left:0;top:0" width="1" height="1"><g fill="none" stroke="#94979c" stroke-width="1"><line x1="662" y1="725.3" x2="662" y2="734.8"/><polyline points="660,732.8 662,734.8 664,732.8"/><line x1="666" y1="726.3" x2="669" y2="726.3"/><line x1="666" y1="729.8" x2="671.5" y2="729.8"/><line x1="666" y1="733.3" x2="674" y2="733.3"/></g></svg>
<div class="t" style="left:700.75px;top:723.57px;font-size:13.5px;color:#50545b;letter-spacing:0.105px;font-family:'Liberation Sans',sans-serif;">Academy - % of searches with results</div>
<div class="a" style="left:20px;top:791px;width:920px;height:1px;background:#f1f2f4"></div>
<div class="t" style="left:39.70px;top:764.57px;font-size:13.5px;color:#9a9da2;font-family:'Liberation Sans',sans-serif;">1</div>
<div class="t" style="left:75.40px;top:764.15px;font-size:14px;color:#1d1f24;font-family:'Liberation Sans',sans-serif;">marleu</div>
<div class="t" style="left:602.97px;top:764.15px;font-size:14px;color:#1d1f24;font-family:'Liberation Sans',sans-serif;">2,586</div>
<div class="t" style="left:897.59px;top:764.15px;font-size:14px;color:#1d1f24;font-family:'Liberation Sans',sans-serif;">0.0%</div>
<div class="a" style="left:20px;top:792px;width:920px;height:41px;background:#f9fafb"></div>
<div class="a" style="left:20px;top:832px;width:920px;height:1px;background:#f1f2f4"></div>
<div class="t" style="left:39.70px;top:805.57px;font-size:13.5px;color:#9a9da2;font-family:'Liberation Sans',sans-serif;">2</div>
<div class="t" style="left:75.40px;top:805.15px;font-size:14px;color:#1d1f24;font-family:'Liberation Sans',sans-serif;">50</div>
<div class="t" style="left:602.97px;top:805.15px;font-size:14px;color:#1d1f24;font-family:'Liberation Sans',sans-serif;">2,658</div>
<div class="t" style="left:893.69px;top:805.15px;font-size:14px;color:#1d1f24;font-family:'Liberation Sans',sans-serif;">100%</div>
<div class="a" style="left:20px;top:873px;width:920px;height:1px;background:#f1f2f4"></div>
<div class="t" style="left:39.70px;top:846.57px;font-size:13.5px;color:#9a9da2;font-family:'Liberation Sans',sans-serif;">3</div>
<div class="t" style="left:75.40px;top:846.15px;font-size:14px;color:#1d1f24;font-family:'Liberation Sans',sans-serif;">adele</div>
<div class="t" style="left:602.97px;top:846.15px;font-size:14px;color:#1d1f24;font-family:'Liberation Sans',sans-serif;">2,659</div>
<div class="t" style="left:893.69px;top:846.15px;font-size:14px;color:#1d1f24;font-family:'Liberation Sans',sans-serif;">100%</div>
<div class="a" style="left:20px;top:874px;width:920px;height:41px;background:#f9fafb"></div>
<div class="a" style="left:20px;top:914px;width:920px;height:1px;background:#f1f2f4"></div>
<div class="t" style="left:39.70px;top:887.57px;font-size:13.5px;color:#9a9da2;font-family:'Liberation Sans',sans-serif;">4</div>
<div class="t" style="left:75.40px;top:887.15px;font-size:14px;color:#1d1f24;font-family:'Liberation Sans',sans-serif;">amy</div>
<div class="t" style="left:602.97px;top:887.15px;font-size:14px;color:#1d1f24;font-family:'Liberation Sans',sans-serif;">7,123</div>
<div class="t" style="left:893.69px;top:887.15px;font-size:14px;color:#1d1f24;font-family:'Liberation Sans',sans-serif;">100%</div>
<div class="a" style="left:20px;top:915px;width:920px;height:39px;background:#f9fafb;border-radius:0 0 0 4px"></div>
<div class="a" style="left:20px;top:915px;width:45px;height:39px;background:#fcfcfd;border-radius:0 0 0 4px"></div>
<div class="t" style="left:251.60px;top:927.97px;font-size:13.5px;color:#3d4047;letter-spacing:0.152px;font-family:'Liberation Sans',sans-serif;">Total (All items)</div>
<div class="t" style="left:595.18px;top:927.55px;font-size:14px;color:#3d4047;font-family:'Liberation Sans',sans-serif;">27,970</div>
<div class="t" style="left:901.48px;top:927.55px;font-size:14px;color:#3d4047;font-family:'Liberation Sans',sans-serif;">91%</div>
<div class="a" style="left:944px;top:714.5px;width:2px;height:199px;background:#d2d4d7;border-radius:1px"></div>
<div class="t" style="left:990.30px;top:614.69px;font-size:15.6px;color:#17191d;letter-spacing:0.232px;font-family:'Liberation Sans',sans-serif;">PA - Search with and without results</div>
<div class="t" style="left:990.30px;top:639.00px;font-size:13px;color:#4b4e55;letter-spacing:0.462px;font-family:'Liberation Sans',sans-serif;">Results can help determine if search or usability must be improved</div>
<div class="a" style="left:990.3px;top:665.0px;width:98.5px;height:30.0px;border-radius:15px;background:linear-gradient(90deg,#fde4d6 0%,#f7ebe5 25%,#f2f0ef 50%,#f2f2f3 100%)"></div>
<div class="a" style="left:1005.0px;top:673.0px;width:3px;height:14px;border-radius:1.5px;background:#ef7d3b"></div>
<div class="t" style="left:1018.50px;top:672.57px;font-size:13.5px;color:#1d1f24;letter-spacing:-0.274px;font-family:'Liberation Sans',sans-serif;">Events</div>
<svg style="left:0;top:0" width="1" height="1"><polyline points="1070.20,677.60 1074.00,681.60 1077.80,677.60" fill="none" stroke="#94979c" stroke-width="1.0"/></svg>
<div class="a" style="left:1099.2px;top:665.0px;width:59.5px;height:30.0px;border-radius:15px;background:#f2f2f3"></div>
<svg style="left:0;top:0" width="1" height="1"><g stroke="#94979c" stroke-width="1"><line x1="1112.2" y1="673.8" x2="1120.5" y2="673.8"/><line x1="1112.2" y1="678.2" x2="1126.7" y2="678.2"/><line x1="1112.2" y1="682.5" x2="1123.5" y2="682.5"/><line x1="1112.2" y1="686.8" x2="1120.5" y2="686.8"/></g></svg>
<svg style="left:0;top:0" width="1" height="1"><polyline points="1140.20,677.60 1144.00,681.60 1147.80,677.60" fill="none" stroke="#94979c" stroke-width="1.0"/></svg>
<div class="a" style="left:1169.0px;top:665.0px;width:59.6px;height:30.0px;border-radius:15px;background:#f2f2f3"></div>
<svg style="left:0;top:0" width="1" height="1"><path d="M1187.18 674.29 L1187.70 672.21 L1190.30 672.21 L1190.82 674.29 L1192.95 675.52 L1195.01 674.93 L1196.31 677.18 L1194.77 678.67 L1194.77 681.13 L1196.31 682.62 L1195.01 684.87 L1192.95 684.28 L1190.82 685.51 L1190.30 687.59 L1187.70 687.59 L1187.18 685.51 L1185.05 684.28 L1182.99 684.87 L1181.69 682.62 L1183.23 681.13 L1183.23 678.67 L1181.69 677.18 L1182.99 674.93 L1185.05 675.52 Z" fill="none" stroke="#94979c" stroke-width="1.05" stroke-linejoin="round"/><circle cx="1189" cy="679.9" r="2.7" fill="none" stroke="#94979c" stroke-width="1.05"/></svg>
<svg style="left:0;top:0" width="1" height="1"><polyline points="1210.20,677.60 1214.00,681.60 1217.80,677.60" fill="none" stroke="#94979c" stroke-width="1.0"/></svg>
<div class="a" style="left:1105.9px;top:710.4px;width:1px;height:183px;background:#e4e5e7"></div>
<div class="t" style="left:1103.78px;top:906.13px;font-size:10.4px;color:#1f2126;font-family:'Liberation Mono',monospace;-webkit-text-stroke:0.2px #1f2126;">0</div>
<div class="a" style="left:1179.3px;top:710.4px;width:1px;height:183px;background:#e4e5e7"></div>
<div class="t" style="left:1167.82px;top:906.13px;font-size:10.4px;color:#1f2126;font-family:'Liberation Mono',monospace;-webkit-text-stroke:0.2px #1f2126;">2.5K</div>
<div class="a" style="left:1252.7px;top:710.4px;width:1px;height:183px;background:#e4e5e7"></div>
<div class="t" style="left:1247.46px;top:906.13px;font-size:10.4px;color:#1f2126;font-family:'Liberation Mono',monospace;-webkit-text-stroke:0.2px #1f2126;">5K</div>
<div class="a" style="left:1326.1px;top:710.4px;width:1px;height:183px;background:#e4e5e7"></div>
<div class="t" style="left:1314.62px;top:906.13px;font-size:10.4px;color:#1f2126;font-family:'Liberation Mono',monospace;-webkit-text-stroke:0.2px #1f2126;">7.5K</div>
<div class="a" style="left:1399.5px;top:710.4px;width:1px;height:183px;background:#e4e5e7"></div>
<div class="t" style="left:1391.14px;top:906.13px;font-size:10.4px;color:#1f2126;font-family:'Liberation Mono',monospace;-webkit-text-stroke:0.2px #1f2126;">10K</div>
<div class="a" style="left:1472.9px;top:710.4px;width:1px;height:183px;background:#e4e5e7"></div>
<div class="t" style="left:1458.30px;top:906.13px;font-size:10.4px;color:#1f2126;font-family:'Liberation Mono',monospace;-webkit-text-stroke:0.2px #1f2126;">12.5K</div>
<div class="a" style="left:1546.3px;top:710.4px;width:1px;height:183px;background:#e4e5e7"></div>
<div class="t" style="left:1537.94px;top:906.13px;font-size:10.4px;color:#1f2126;font-family:'Liberation Mono',monospace;-webkit-text-stroke:0.2px #1f2126;">15K</div>
<div class="a" style="left:1619.7px;top:710.4px;width:1px;height:183px;background:#e4e5e7"></div>
<div class="t" style="left:1605.10px;top:906.13px;font-size:10.4px;color:#1f2126;font-family:'Liberation Mono',monospace;-webkit-text-stroke:0.2px #1f2126;">17.5K</div>
<div class="a" style="left:1693.1px;top:710.4px;width:1px;height:183px;background:#e4e5e7"></div>
<div class="t" style="left:1684.74px;top:906.13px;font-size:10.4px;color:#1f2126;font-family:'Liberation Mono',monospace;-webkit-text-stroke:0.2px #1f2126;">20K</div>
<div class="a" style="left:1766.5px;top:710.4px;width:1px;height:183px;background:#e4e5e7"></div>
<div class="t" style="left:1751.90px;top:906.13px;font-size:10.4px;color:#1f2126;font-family:'Liberation Mono',monospace;-webkit-text-stroke:0.2px #1f2126;">22.5K</div>
<div class="a" style="left:1839.9px;top:710.4px;width:1px;height:183px;background:#e4e5e7"></div>
<div class="t" style="left:1831.54px;top:906.13px;font-size:10.4px;color:#1f2126;font-family:'Liberation Mono',monospace;-webkit-text-stroke:0.2px #1f2126;">25K</div>
<div class="a" style="left:1107px;top:728.2px;width:744.9px;height:55.6px;background:#314d72;border-radius:0 2px 2px 0"></div>
<div class="a" style="left:1107px;top:820.1px;width:74.9px;height:55.6px;background:#4a9be6;border-radius:0 2px 2px 0"></div>
<div class="a" style="left:1820px;top:773px;width:42px;height:15px;background:#314d72;border-radius:2px"></div>
<div class="t" style="left:1822.50px;top:775.69px;font-size:11px;color:#ffffff;font-weight:700;letter-spacing:0.671px;font-family:'Liberation Sans',sans-serif;">25,384</div>
<div class="a" style="left:1186px;top:841.2px;width:34.7px;height:14.4px;background:#4a9be6;border-radius:2px"></div>
<div class="t" style="left:1188.30px;top:843.69px;font-size:11px;color:#ffffff;font-weight:700;letter-spacing:0.618px;font-family:'Liberation Sans',sans-serif;">2,586</div>
<div class="t" style="left:995.70px;top:751.48px;font-size:11.6px;color:#2a2d33;letter-spacing:-0.009px;font-family:'Liberation Sans',sans-serif;">Searches with re...</div>
<div class="t" style="left:995.70px;top:843.38px;font-size:11.6px;color:#2a2d33;letter-spacing:0.028px;font-family:'Liberation Sans',sans-serif;">Searches withou...</div>
<div class="t" style="left:1364.40px;top:928.00px;font-size:13px;color:#1d1f24;letter-spacing:0.291px;font-family:'Liberation Sans',sans-serif;">Internal search - Result</div>
<div class="a" style="left:40px;top:325px;width:320px;height:289.5px;background:#fff;border-radius:4px;box-shadow:0 6px 36px rgba(20,30,50,0.10),0 2px 8px rgba(20,30,50,0.04)"></div>
<div class="a" style="left:40px;top:325px;width:320px;height:100px;background:#ecedf0;border-radius:4px 4px 0 0"></div>
<svg style="left:0;top:0" width="1" height="1"><g fill="none" stroke="#8e9196" stroke-width="1"><polyline points="60.9,346.3 57.3,346.3 57.3,352.6 60.9,352.6"/><polyline points="66.3,346.3 72.6,346.3 72.6,352.6 66.3,352.6"/><line x1="63.6" y1="343.3" x2="63.6" y2="355.3"/><line x1="61.6" y1="343.3" x2="65.6" y2="343.3"/><line x1="61.6" y1="355.3" x2="65.6" y2="355.3"/></g></svg>
<div class="t" style="left:80.60px;top:343.77px;font-size:13.5px;color:#17191d;letter-spacing:0.267px;font-family:'Liberation Sans',sans-serif;-webkit-text-stroke:0.12px #17191d;">Metrics</div>
<svg style="left:0;top:0" width="1" height="1"><g fill="none" stroke="#2a2d33" stroke-width="1.15"><circle cx="60.7" cy="397.2" r="5.1"/><line x1="57.3" y1="401" x2="53.1" y2="404.8"/></g></svg>
<div class="a" style="left:80.1px;top:390.2px;width:1.3px;height:15.5px;background:#17191d"></div>
<div class="t" style="left:81.30px;top:392.17px;font-size:13.5px;color:#a9acb1;letter-spacing:0.138px;font-family:'Liberation Sans',sans-serif;">Search for a metric...</div>
<svg style="left:0;top:0" width="1" height="1"><g fill="none" stroke="#8e9196" stroke-width="1"><line x1="334.4" y1="393.5" x2="334.4" y2="404"/><line x1="339.4" y1="390.6" x2="339.4" y2="399.8"/><line x1="344.4" y1="393.5" x2="344.4" y2="404"/><line x1="339.4" y1="401.5" x2="339.4" y2="404"/><line x1="334.4" y1="390.6" x2="334.4" y2="391.8"/><line x1="344.4" y1="390.6" x2="344.4" y2="391.8"/><line x1="332.6" y1="392.6" x2="336.2" y2="392.6"/><line x1="337.6" y1="400.6" x2="341.2" y2="400.6"/><line x1="342.6" y1="392.6" x2="346.2" y2="392.6"/></g></svg>
<div class="t" style="left:55.40px;top:436.47px;font-size:13.5px;color:#50545b;letter-spacing:0.348px;font-family:'Liberation Sans',sans-serif;">Metrics of the report</div>
<div class="a" style="left:303px;top:436.2px;width:17px;height:17.3px;background:#e8e9eb;border-radius:2px"></div>
<div class="t" style="left:308.58px;top:439.71px;font-size:10.5px;color:#2a2d33;font-family:'Liberation Sans',sans-serif;">3</div>
<div class="a" style="left:337px;top:443.8px;width:7px;height:1px;background:#9a9da2"></div>
<div class="a" style="left:40px;top:465px;width:320px;height:50px;background:#f3f4f7"></div>
<div class="t" style="left:50.60px;top:483.35px;font-size:14px;color:#17191d;letter-spacing:-0.095px;font-family:'Liberation Sans',sans-serif;">Conversion rate</div>
<svg style="left:0;top:0" width="1" height="1"><circle cx="340" cy="490" r="6.8" fill="none" stroke="#8e9196" stroke-width="1"/><line x1="340" y1="488.5" x2="340" y2="493.5" stroke="#8e9196" stroke-width="1.2"/><circle cx="340" cy="486.3" r="0.75" fill="#8e9196"/></svg>
<svg style="left:0;top:0" width="1" height="1"><polyline points="52.7,546.2 62.4,534.7 63.3,544.9000000000001 67.8,540.2" fill="none" stroke="#17191d" stroke-width="1.15" stroke-linejoin="miter"/></svg>
<div class="t" style="left:80.40px;top:533.35px;font-size:14px;color:#17191d;letter-spacing:-0.560px;font-family:'Liberation Sans',sans-serif;">Events</div>
<svg style="left:0;top:0" width="1" height="1"><polyline points="52.7,596.0 62.4,584.5 63.3,594.7 67.8,590.0" fill="none" stroke="#17191d" stroke-width="1.15" stroke-linejoin="miter"/></svg>
<div class="t" style="left:80.40px;top:583.15px;font-size:14px;color:#17191d;letter-spacing:-0.064px;font-family:'Liberation Sans',sans-serif;">Visitors</div>
<svg style="left:0;top:0" width="1" height="1"><polyline points="333.6,540.8 337.6,545 346,535.3" fill="none" stroke="#2a2d33" stroke-width="1.15"/></svg>
<svg style="left:0;top:0" width="1" height="1"><line x1="134.9" y1="302" x2="138.1" y2="338" stroke="#000" stroke-width="3.1" stroke-linecap="butt"/><polygon points="129.7,337.4 146,336.2 138.8,352.5" fill="#000"/></svg>
<div class="a" style="left:1850px;top:950px;width:40px;height:40px;border-radius:20px;background:#fff;box-shadow:0 2px 10px rgba(0,0,0,0.06)"></div>
<svg style="left:0;top:0" width="1" height="1"><g fill="none" stroke="#8e9196" stroke-width="0.95" stroke-linejoin="round"><path d="M1865.3 969.3 L1871.8 963.3 Q1875 961.5 1877.9 962.4 Q1878.7 965.4 1876.8 967.6 L1870.4 974 Z"/><polyline points="1865.3,969.3 1862.5,969.4 1866.2,965.9"/><polyline points="1870.4,974 1870.4,977.8 1873.8,974.2"/><circle cx="1873.4" cy="966.4" r="1.4"/><path d="M1863.6 976.4 Q1863.4 973.6 1865.4 972.8 L1867.4 974.8 Q1866.6 976.7 1863.6 976.4 Z"/></g></svg>
<div class="a" style="left:1840px;top:1000px;width:60px;height:60px;border-radius:30px;background:linear-gradient(100deg,#50535a 0%,#3f4248 55%,#33363b 100%);box-shadow:0 4px 24px rgba(0,0,0,0.10)"></div>
<div class="a" style="left:1863.4px;top:1029.3px;width:13.2px;height:1.3px;background:#9c9ea3"></div>
<div class="a" style="left:1869.35px;top:1023.3px;width:1.3px;height:13.2px;background:#9c9ea3"></div>
</body></html>
